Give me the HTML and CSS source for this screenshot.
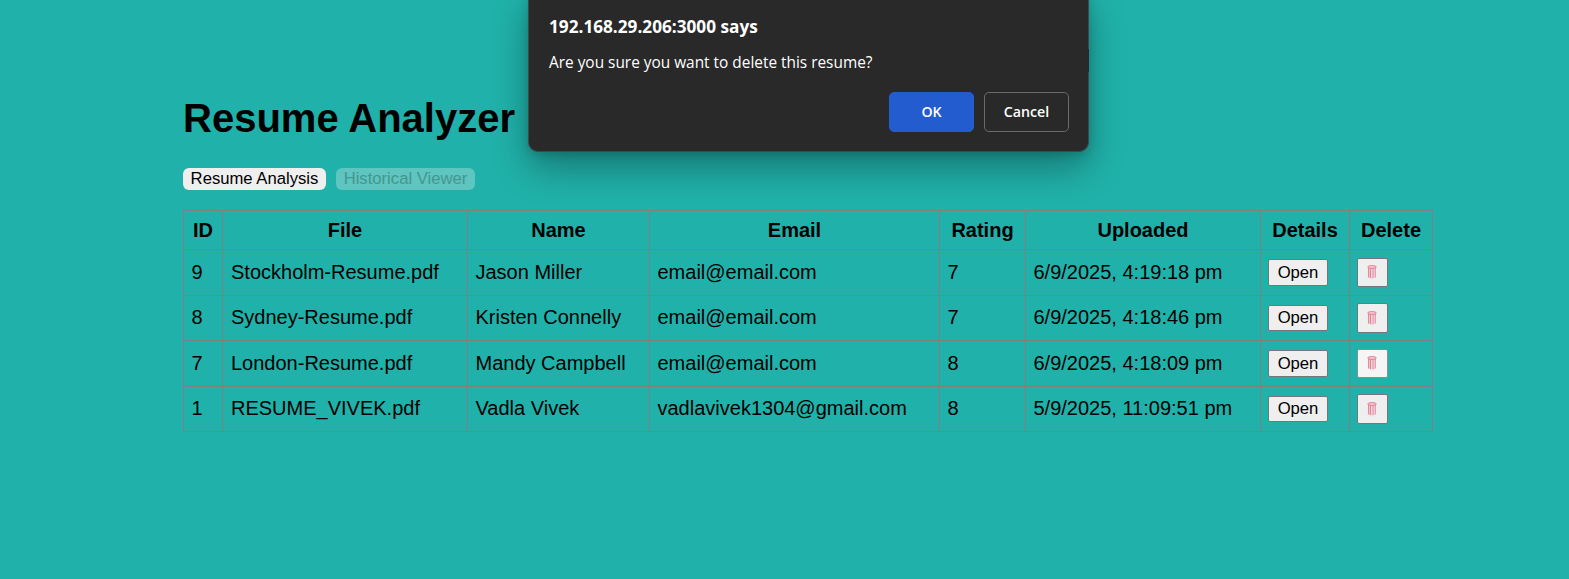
FILE: index.html
```html
<!DOCTYPE html>
<html lang="en">
<head>
<meta charset="utf-8">
<title>Resume Analyzer</title>
<link rel="stylesheet" href="styles.css">
</head>
<body>
<svg width="0" height="0" class="defs" aria-hidden="true">
  <symbol id="trash" viewBox="0 0 10 15">
    <path d="M1.2 2 1.7 12.6Q5 15.4 8.3 12.6L8.8 2Z" fill="#f3c3d2"/>
    <path d="M1.5 3v9.5" stroke="#e08f96" stroke-width="1.1"/>
    <path d="M8.5 3v9.5" stroke="#e99db2" stroke-width="1"/>
    <path d="M3.5 4v9" stroke="#d9738f" stroke-width=".8"/>
    <path d="M4.9 4v9.5" stroke="#f4e9c6" stroke-width="1"/>
    <path d="M6 4v9" stroke="#c98bc0" stroke-width=".7"/>
    <path d="M3 13.5Q5 14.4 7 13.5" stroke="#f6dce4" fill="none"/>
    <ellipse cx="5" cy="2" rx="4.3" ry="1.3" fill="#f6dde2" stroke="#dd7386" stroke-width="1"/>
  </symbol>
</svg>
<main class="page">
  <h1 class="title">Resume Analyzer</h1>
  <nav class="tabs">
    <button class="tab">Resume Analysis</button>
    <button class="tab" disabled>Historical Viewer</button>
  </nav>
  <table class="history">
    <colgroup><col class="c-id"><col class="c-file"><col class="c-name"><col class="c-email"><col class="c-rating"><col class="c-uploaded"><col class="c-details"><col class="c-delete"></colgroup>
    <thead>
      <tr><th>ID</th><th>File</th><th>Name</th><th>Email</th><th>Rating</th><th>Uploaded</th><th>Details</th><th>Delete</th></tr>
    </thead>
    <tbody>
      <tr class="tall"><td>9</td><td class="file">Stockholm-Resume.pdf</td><td>Jason Miller</td><td>email@email.com</td><td>7</td><td>6/9/2025, 4:19:18 pm</td><td class="action"><button class="open">Open</button></td><td class="action"><button class="delete" aria-label="Delete"><svg><use href="#trash"/></svg></button></td></tr>
      <tr><td>8</td><td class="file">Sydney-Resume.pdf</td><td>Kristen Connelly</td><td>email@email.com</td><td>7</td><td>6/9/2025, 4:18:46 pm</td><td class="action"><button class="open">Open</button></td><td class="action"><button class="delete" aria-label="Delete"><svg><use href="#trash"/></svg></button></td></tr>
      <tr class="tall"><td>7</td><td class="file">London-Resume.pdf</td><td>Mandy Campbell</td><td>email@email.com</td><td>8</td><td>6/9/2025, 4:18:09 pm</td><td class="action"><button class="open">Open</button></td><td class="action"><button class="delete pressed" aria-label="Delete"><svg><use href="#trash"/></svg></button></td></tr>
      <tr><td>1</td><td class="file">RESUME_VIVEK.pdf</td><td>Vadla Vivek</td><td>vadlavivek1304@gmail.com</td><td>8</td><td>5/9/2025, 11:09:51 pm</td><td class="action"><button class="open">Open</button></td><td class="action"><button class="delete" aria-label="Delete"><svg><use href="#trash"/></svg></button></td></tr>
    </tbody>
  </table>
</main>
<div class="dialog" role="alertdialog">
  <h2 class="dialog-title">192.168.29.206:3000 says</h2>
  <p class="dialog-text">Are you sure you want to delete this resume?</p>
  <div class="dialog-actions">
    <button class="dialog-btn primary">OK</button>
    <button class="dialog-btn">Cancel</button>
  </div>
</div>
</body>
</html>
```
FILE: styles.css
```css
* { box-sizing: border-box; }
html, body { margin: 0; height: 100%; }
body {
  background: #20b2aa;
  color: #000;
  font: 20px/23px "Liberation Sans", Arial, sans-serif;
  overflow: hidden;
}
.defs { position: absolute; }
.page { width: 1250px; margin-left: 183px; padding-top: 95px; }
.title { margin: 0; font-size: 40px; line-height: 46px; font-weight: 700; white-space: nowrap; }
.tabs { display: flex; gap: 10px; margin-top: 27px; height: 22px; }
.tab {
  height: 22px;
  padding: 0;
  width: 143px;
  border: 0;
  border-radius: 6px;
  background: #efefef;
  color: #000;
  font: 16.67px/20px "Liberation Sans", Arial, sans-serif;
  white-space: nowrap;
}
.tab:disabled { width: 139px; background: #5ec5bf; color: #439791; }
.history {
  width: 1250px;
  margin-top: 20px;
  border-collapse: collapse;
  table-layout: fixed;
}
.history th, .history td { border: 1px solid #808080; padding: 0 8px; height: 45px; white-space: nowrap; }
.history th { height: 39px; padding: 0; font-weight: 700; }
.history td { padding: 0 7px 1px 7.5px; text-align: left; vertical-align: middle; }
.history .tall td { height: 46px; padding-bottom: 0; }
.history .file { padding-left: 8px; }
.history .action { padding-bottom: 0; }
.c-id { width: 39px; }
.c-file { width: 245px; }
.c-name { width: 182px; }
.c-email { width: 290px; }
.c-rating { width: 86px; }
.c-uploaded { width: 235px; }
.c-details { width: 89px; }
.c-delete { width: 83px; }
.open, .delete {
  display: block;
  margin-left: -.5px;
  padding: 0;
  border: 1px solid #767676;
  border-radius: 2px;
  background: #efefef;
  color: #000;
}
.open { width: 60px; height: 26px; font: 16.67px/22px "Liberation Sans", Arial, sans-serif; }
.delete { display: flex; align-items: center; justify-content: center; width: 31px; height: 30px; }
.tall .open { height: 27px; }
.tall .delete { height: 29px; }
.delete svg { width: 10px; height: 15px; margin-right: 1px; }
.pressed { background: #f5f5f5; border-color: #8d8d8d; }
.dialog {
  position: absolute;
  left: 528px;
  top: -10px;
  width: 561px;
  height: 162px;
  padding: 26px 19px 20px 20px;
  border: 1px solid #3a4a49;
  border-top: 0;
  border-radius: 10px;
  background: #292929;
  color: #fff;
  font-family: "Open Sans", "Noto Sans", sans-serif;
  box-shadow: 0 16px 36px rgba(0, 0, 0, .33), 0 2px 10px rgba(0, 0, 0, .15);
}
.dialog::after {
  content: "";
  position: absolute;
  right: -1px;
  top: 59px;
  width: 1px;
  height: 23px;
  background: #292929;
}
.dialog-title { margin: 0; font-size: 17.2px; line-height: 22px; font-weight: 700; white-space: nowrap; }
.dialog-text { margin: 15px 0 0; font-size: 15.4px; line-height: 20px; white-space: nowrap; }
.dialog-actions { display: flex; justify-content: flex-end; gap: 10px; margin-top: 19px; }
.dialog-btn {
  width: 85px;
  height: 40px;
  padding: 0;
  border: 1px solid #6b6b6b;
  border-radius: 5px;
  background: transparent;
  color: #fff;
  font: 600 14.2px/20px "Open Sans", "Noto Sans", sans-serif;
}
.primary { background: #235ccf; border-color: #235ccf; }
```
